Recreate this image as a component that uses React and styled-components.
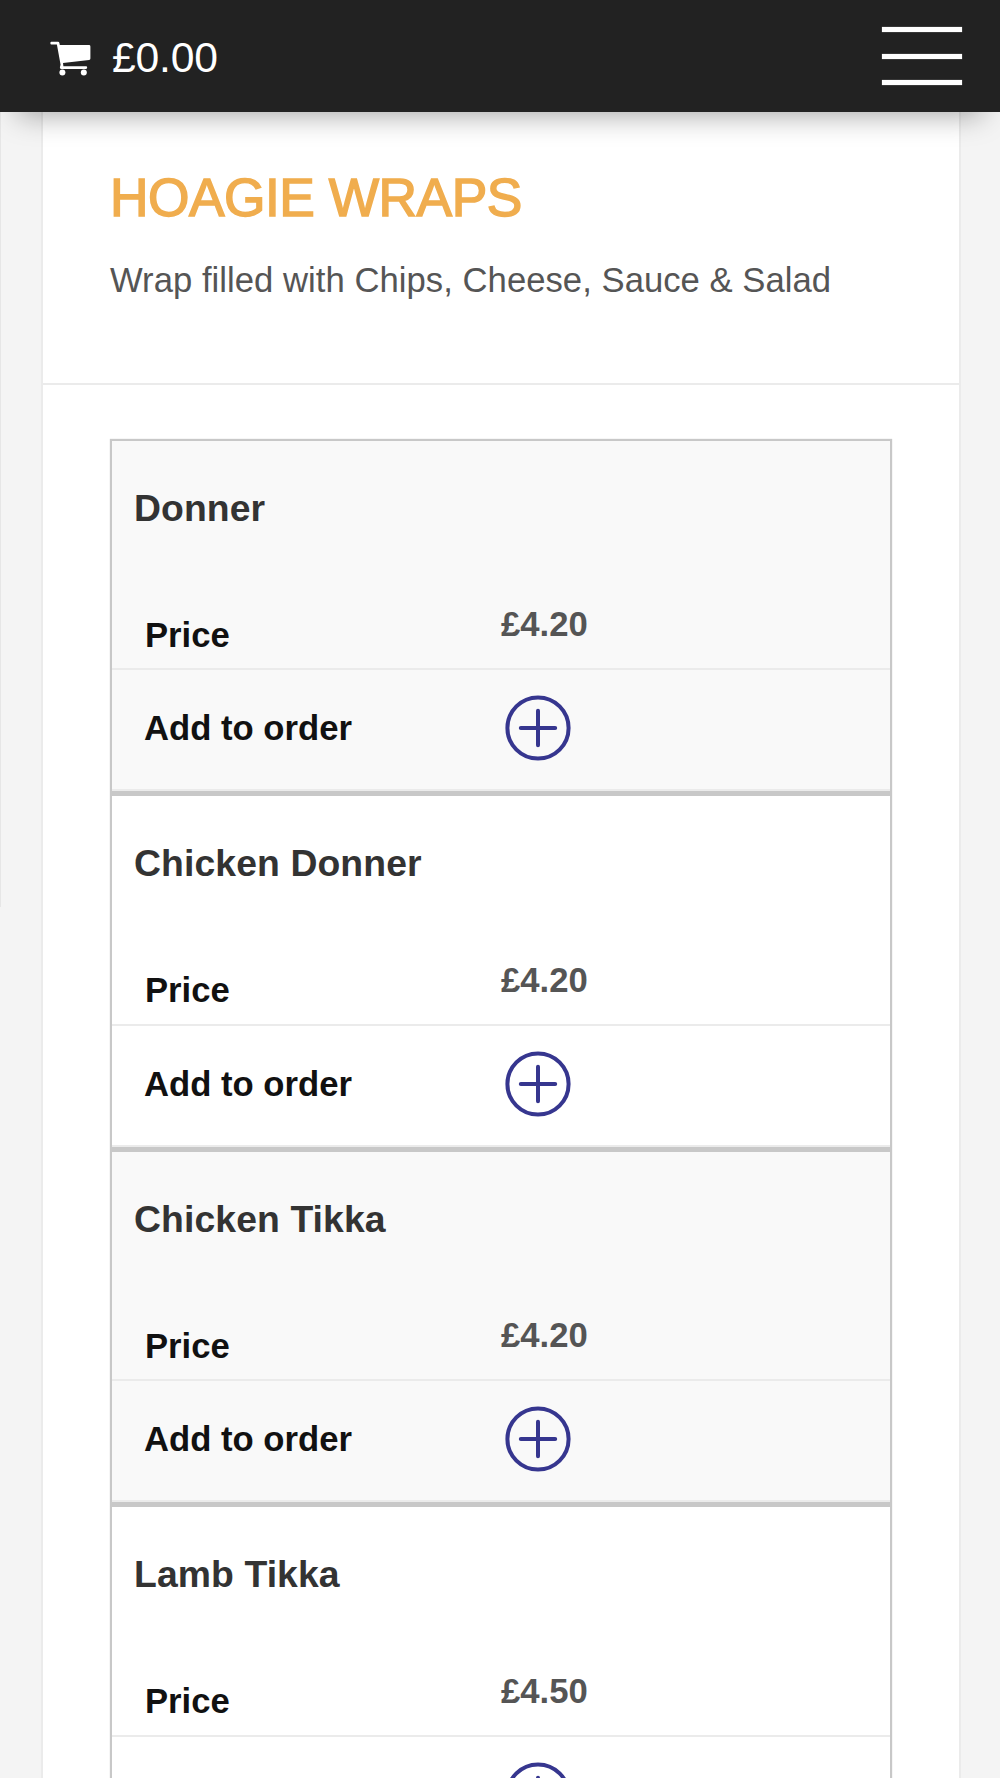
import React from "react";
import styled, { createGlobalStyle } from "styled-components";

const menuItems = [
  { id: 1, name: "Donner", price: "£4.20" },
  { id: 2, name: "Chicken Donner", price: "£4.20" },
  { id: 3, name: "Chicken Tikka", price: "£4.20" },
  { id: 4, name: "Lamb Tikka", price: "£4.50" },
];

const GlobalStyle = createGlobalStyle`
  * {
    box-sizing: border-box;
  }
  html, body {
    margin: 0;
    padding: 0;
    overflow: hidden;
  }
  body {
    background: #f4f4f4;
    font-family: "Liberation Sans", Arial, Helvetica, sans-serif;
  }
`;
const StylePage = styled.div`
  height: 1778px;
  overflow: hidden;
  display: flex;
  flex-direction: column;
  background: linear-gradient(#e6e6e6, #e6e6e6) 0 0 / 1px 907px no-repeat;
`;
const StyleHeader = styled.header`
  position: relative;
  z-index: 2;
  flex: none;
  height: 112px;
  padding: 0 38px 0 50px;
  display: flex;
  align-items: center;
  justify-content: space-between;
  background: #222;
  box-shadow: 0 20px 30px -18px rgba(0, 0, 0, 0.38);
`;
const StyleBasket = styled.div`
  display: flex;
  align-items: center;
  gap: 21px;
  color: #fff;
  svg {
    display: block;
    margin-top: 5px;
  }
`;
const StyleTotal = styled.span`
  padding-top: 2px;
  font-size: 42.67px;
  line-height: 48px;
  letter-spacing: -0.2px;
`;
const StyleBurger = styled.button`
  width: 80px;
  padding: 0;
  border: 0;
  background: none;
  display: flex;
  flex-direction: column;
  gap: 21.5px;
`;
const StyleBar = styled.span`
  height: 5px;
  background: #fff;
  box-shadow: 0 0 1px rgba(255, 255, 255, 0.6);
`;
const StyleCard = styled.main`
  flex: none;
  margin: 0 39px 0 41px;
  border: 2px solid #ebebeb;
  border-width: 0 2px;
  background: #fff;
`;
const StyleIntro = styled.section`
  height: 273px;
  padding: 56px 67px 0;
  border-bottom: 2px solid #ebebeb;
`;
const StyleTitle = styled.h2`
  margin: 0;
  font-size: 53.33px;
  font-weight: 400;
  line-height: 60px;
  letter-spacing: -0.5px;
  color: #f0ad4e;
  -webkit-text-stroke: 1.5px #f0ad4e;
`;
const StyleText = styled.p`
  margin: 32px 0 0;
  font-size: 34.67px;
  line-height: 40px;
  letter-spacing: 0.03px;
  color: #555;
  white-space: nowrap;
`;
const StyleTable = styled.div`
  margin: 53.75px 67px 0;
  border: 2px solid #c8c8c8;
  box-shadow: 0 0 1px #c8c8c8;
`;
const StyleItem = styled.article`
  height: 355.5px;
  border-bottom: 5px solid #c8c8c8;
  background: ${(props) => (props.$odd ? "#f9f9f9" : "#fff")};
`;
const StyleName = styled.h3`
  margin: 0;
  height: 136px;
  padding: 46px 0 0 22px;
  font-size: 37.33px;
  line-height: 42px;
  letter-spacing: 0.1px;
  color: #333;
`;
const StyleRow = styled.div`
  display: grid;
  grid-template-columns: 389px 1fr;
  height: ${(props) => props.$height}px;
  border-bottom: 2px solid #ebebeb;
`;
const StyleLabel = styled.div`
  padding: 44px 0 0 ${(props) => props.$left}px;
  font-size: 34.67px;
  font-weight: 700;
  line-height: 28px;
  color: #111;
`;
const StylePrice = styled.div`
  padding-top: 27.25px;
  font-size: 34.67px;
  font-weight: 700;
  line-height: 40px;
  color: #555;
`;
const StyleAdd = styled.button`
  width: 66px;
  height: 66px;
  margin: 25px 0 0 4px;
  padding: 0;
  border: 0;
  background: none;
  svg {
    display: block;
  }
`;

function CartIcon() {
  return (
    <svg width="41" height="36" viewBox="0 0 41 36" fill="#fff">
      <path d="M0.4 1.7Q0.4 0.7 1.4 0.7H8Q9.1 0.7 9.4 2L9.8 4H39Q40.4 4 40.4 5.4V17.4Q40.4 18.7 39.1 19L13 22.1L13.4 25.2H36Q37.2 25.2 37.2 26.6Q37.2 28 36 28H11.2Q9.6 28 9.9 26.3L10.6 23.8L6.9 3.6H1.4Q0.4 3.6 0.4 2.6Z" />
      <circle cx="12.4" cy="31.6" r="3" />
      <circle cx="33.8" cy="31.6" r="3" />
    </svg>
  );
}

function PlusIcon() {
  return (
    <svg
      width="66"
      height="66"
      viewBox="0 0 66 66"
      fill="none"
      stroke="#36368f"
      strokeWidth="4"
      strokeLinecap="round"
    >
      <circle cx="33" cy="33" r="30.6" />
      <path d="M33 15.8V50.2M15.8 33H50.2" />
    </svg>
  );
}

function App() {
  return (
    <StylePage>
      <GlobalStyle />
      <StyleHeader>
        <StyleBasket>
          <CartIcon />
          <StyleTotal>£0.00</StyleTotal>
        </StyleBasket>
        <StyleBurger aria-label="Menu">
          <StyleBar />
          <StyleBar />
          <StyleBar />
        </StyleBurger>
      </StyleHeader>
      <StyleCard>
        <StyleIntro>
          <StyleTitle>HOAGIE WRAPS</StyleTitle>
          <StyleText>Wrap filled with Chips, Cheese, Sauce &amp; Salad</StyleText>
        </StyleIntro>
        <StyleTable>
          {menuItems.map((item, index) => (
            <StyleItem key={item.id} $odd={index % 2 === 0}>
              <StyleName>{item.name}</StyleName>
              <StyleRow $height={93.5}>
                <StyleLabel $left={33}>Price</StyleLabel>
                <StylePrice>{item.price}</StylePrice>
              </StyleRow>
              <StyleRow $height={121}>
                <StyleLabel $left={32}>Add to order</StyleLabel>
                <StyleAdd aria-label={`Add ${item.name}`}>
                  <PlusIcon />
                </StyleAdd>
              </StyleRow>
            </StyleItem>
          ))}
        </StyleTable>
      </StyleCard>
    </StylePage>
  );
}

export default App;
